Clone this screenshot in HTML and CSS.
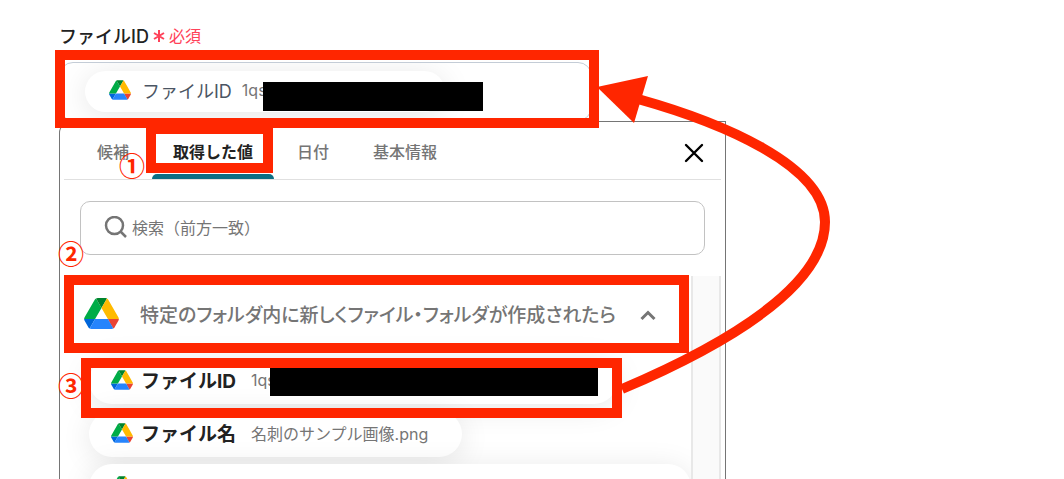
FILE: index.html
```
<!DOCTYPE html>
<html lang="ja">

<head>
  <meta charset="utf-8">
  <title>ファイルID</title>
  <link rel="stylesheet" href="styles.css">
</head>

<body>
  <svg class="defs" width="0" height="0" aria-hidden="true">
    <symbol id="drive" viewBox="0 0 87.3 78">
      <path fill="#0066da" d="m6.6 66.85 3.85 6.65c.8 1.4 1.95 2.5 3.3 3.3l13.75-23.8h-27.5c0 1.55.4 3.1 1.2 4.5z"/>
      <path fill="#00ac47" d="m43.65 25-13.75-23.8c-1.35.8-2.5 1.9-3.3 3.3l-25.4 44a9.06 9.06 0 0 0 -1.2 4.5h27.5z"/>
      <path fill="#ea4335" d="m73.55 76.8c1.35-.8 2.5-1.9 3.3-3.3l1.6-2.75 7.65-13.25c.8-1.4 1.2-2.95 1.2-4.5h-27.5l5.85 11.5z"/>
      <path fill="#00832d" d="m43.65 25 13.75-23.8c-1.35-.8-2.9-1.2-4.5-1.2h-18.5c-1.6 0-3.15.45-4.5 1.2z"/>
      <path fill="#2684fc" d="m59.8 53h-32.3l-13.75 23.8c1.35.8 2.9 1.2 4.5 1.2h50.8c1.6 0 3.15-.45 4.5-1.2z"/>
      <path fill="#ffba00" d="m73.4 26.5-12.7-22c-.8-1.4-1.95-2.5-3.3-3.3l-13.75 23.8 16.15 28h27.45c0-1.55-.4-3.1-1.2-4.5z"/>
    </symbol>
  </svg>

  <main class="page">
    <div class="label-row">
      <label for="file-id">ファイルID</label>
      <span class="required">
        <svg width="12" height="14" viewBox="0 0 12 14" aria-hidden="true">
          <path d="M6 2v12M1 5l10 6M11 5L1 11" stroke="currentColor" stroke-width="2" fill="none"/>
        </svg>
        必須
      </span>
    </div>

    <div class="field">
      <span class="chip chip-selected">
        <svg class="drive-icon"><use href="#drive"/></svg>
        <span class="chip-name">ファイルID</span>
        <span class="chip-value">1qs</span>
      </span>
      <input id="file-id" class="field-input" type="text">
    </div>

    <section class="panel">
      <div class="tabs">
        <button class="tab" type="button">候補</button>
        <button class="tab active" type="button">取得した値</button>
        <button class="tab" type="button">日付</button>
        <button class="tab" type="button">基本情報</button>
        <button class="close" type="button" aria-label="閉じる">
          <svg width="20" height="20" viewBox="0 0 20 20">
            <path d="M2 2l16 16M18 2L2 18" stroke="#000" stroke-width="2.400" stroke-linecap="round"/>
          </svg>
        </button>
      </div>

      <label class="search">
        <svg width="24" height="24" viewBox="0 0 24 24" fill="none" stroke="#757575" stroke-width="2.500" aria-hidden="true">
          <circle cx="10.500" cy="9.500" r="8.500"/>
          <path d="M16.500 15.500l5.500 5.500"/>
        </svg>
        <input type="text" placeholder="検索（前方一致）" aria-label="検索（前方一致）">
      </label>

      <div class="list">
        <div class="list-content">
          <button class="group" type="button">
            <svg class="drive-icon-large"><use href="#drive"/></svg>
            <span class="group-name">特定のフォルダ内に新しくファイル・フォルダが作成されたら</span>
            <svg width="16" height="16" viewBox="0 0 16 16" aria-hidden="true">
              <path d="M1.500 14L8 7.500l6.500 6.500" stroke="#757575" stroke-width="3" fill="none"/>
            </svg>
          </button>
          <div class="chips">
            <button class="chip chip-long" type="button">
              <svg class="drive-icon"><use href="#drive"/></svg>
              <span class="chip-name">ファイルID</span>
              <span class="chip-value">1qs</span>
            </button>
            <button class="chip" type="button">
              <svg class="drive-icon"><use href="#drive"/></svg>
              <span class="chip-name">ファイル名</span>
              <span class="chip-value">名刺のサンプル画像.png</span>
            </button>
            <button class="chip chip-full" type="button" aria-label="Google Drive">
              <svg class="drive-icon"><use href="#drive"/></svg>
            </button>
          </div>
        </div>
        <div class="track"></div>
      </div>
    </section>

    <!-- step numbers, frames and arrow drawn over the form -->
    <svg class="notes" width="900" height="479" viewBox="0 0 900 479" aria-hidden="true">
      <rect x="263" y="82" width="220" height="29"/>
      <rect x="270" y="368" width="328" height="28"/>
      <g class="step">
        <text x="132" y="176">①</text>
        <text x="71" y="264">②</text>
        <text x="71" y="396">③</text>
      </g>
      <g class="frame">
        <rect x="60" y="55" width="534" height="68"/>
        <rect x="151" y="129" width="117" height="39"/>
        <rect x="69" y="280" width="615" height="68"/>
        <rect x="86" y="363" width="531" height="50"/>
        <path d="M622 389C730 343 825 285 825 222C825 165 720 122 638 99"/>
      </g>
      <path class="arrow-head" d="M597 87L648 76L634 123z"/>
    </svg>
  </main>
</body>

</html>
```
FILE: styles.css
```
* {
  box-sizing: border-box;
}

body {
  margin: 0;
  background: #fff;
  color: #222;
  font-family: Inter, "Noto Sans CJK JP", sans-serif;
  font-size: 16px;
}

button {
  border: none;
  background: none;
  padding: 0;
  font: inherit;
  color: inherit;
  cursor: pointer;
}

input {
  border: none;
  outline: none;
  background: none;
  padding: 0;
  min-width: 0;
  font: inherit;
}

svg {
  flex-shrink: 0;
}

.defs {
  position: absolute;
}

.page {
  position: relative;
  display: flex;
  flex-direction: column;
  height: 100vh;
  padding: 22px 59px 0;
  overflow: hidden;
}

.label-row {
  display: flex;
  align-items: center;
  gap: 4px;
  height: 26px;
  margin-bottom: 14px;
  font-size: 18px;
  font-weight: 500;
}

.required {
  display: flex;
  align-items: center;
  gap: 4px;
  color: #ff4259;
  font-size: 16px;
  font-weight: 400;
}

.field {
  display: flex;
  align-items: center;
  width: 100%;
  max-width: 533px;
  height: 59px;
  flex-shrink: 0;
  padding: 0 25px;
  border: 1px solid #c4ccd6;
  border-radius: 14px;
  overflow: hidden;
}

.field-input {
  flex: 1;
}

.panel {
  flex: 1;
  min-height: 0;
  display: flex;
  flex-direction: column;
  width: 100%;
  max-width: 667px;
  padding: 0 4px;
  border: 1px solid #757575;
  border-bottom: none;
  border-radius: 12px 0 0 0;
  overflow: hidden;
}

.tabs {
  display: flex;
  gap: 2px;
  height: 58px;
  flex-shrink: 0;
  padding-left: 12px;
  border-bottom: 1px solid #e0e0e0;
}

.tab {
  position: relative;
  padding: 0 21px;
  color: #757575;
  font-size: 16px;
  font-weight: 500;
}

.tab.active {
  color: #222;
  font-weight: 700;
}

.tab.active::after {
  content: "";
  position: absolute;
  left: 0;
  right: 0;
  bottom: 0;
  height: 5px;
  border-radius: 5px 5px 0 0;
  background: #0b6e84;
}

.close {
  margin-left: auto;
  padding: 4px 17px 0;
  line-height: 0;
}

.search {
  display: flex;
  align-items: center;
  gap: 4px;
  height: 54px;
  flex-shrink: 0;
  margin: 21px 16px;
  padding: 0 23px;
  border: 1px solid #c2c2c2;
  border-radius: 10px;
}

.search input {
  flex: 1;
}

.search input::placeholder {
  color: #757575;
}

.list {
  flex: 1;
  min-height: 0;
  display: flex;
}

.list-content {
  flex: 1;
  min-width: 0;
  overflow: hidden;
}

.track {
  width: 30px;
  border: solid #e8e8e8;
  border-width: 0 2px;
  background: #fafafa;
}

.group {
  display: flex;
  align-items: center;
  width: 100%;
  height: 76px;
  padding: 0 0 2px 20px;
}

.group-name {
  margin: 0 24px 0 21px;
  color: #757575;
  font-size: 19px;
  font-weight: 500;
  font-feature-settings: "palt";
  white-space: nowrap;
}

.drive-icon {
  width: 22px;
  height: 20px;
}

.drive-icon-large {
  width: 35px;
  height: 31px;
}

.chips {
  display: flex;
  flex-direction: column;
  align-items: flex-start;
  gap: 7px;
  padding: 6px 0 0 25px;
}

.chip {
  display: flex;
  align-items: center;
  height: 46px;
  flex-shrink: 0;
  padding: 0 34px 3px 22px;
  border-radius: 23px;
  background: #fff;
  box-shadow: 0 4px 30px rgba(0, 0, 0, 0.1);
}

.chip-name {
  margin: 0 15px 0 8px;
  font-size: 19px;
  font-weight: 700;
}

.chip-value {
  color: #757575;
  font-size: 16px;
}

.chip-selected {
  width: 360px;
  height: 41px;
  padding-left: 24px;
}

.chip-selected .chip-name {
  margin: 0 10px 0 11px;
  color: #4b5563;
  font-size: 18px;
  font-weight: 400;
}

.chip-long {
  width: 528px;
}

.chip-full {
  width: 100%;
}

.notes {
  position: absolute;
  top: 0;
  left: 0;
}

.step {
  fill: #ff2600;
  font-family: "Noto Sans CJK JP", sans-serif;
  font-size: 26px;
  font-weight: 700;
  text-anchor: middle;
}

.frame {
  fill: none;
  stroke: #ff2600;
  stroke-width: 10;
}

.arrow-head {
  fill: #ff2600;
}
```
